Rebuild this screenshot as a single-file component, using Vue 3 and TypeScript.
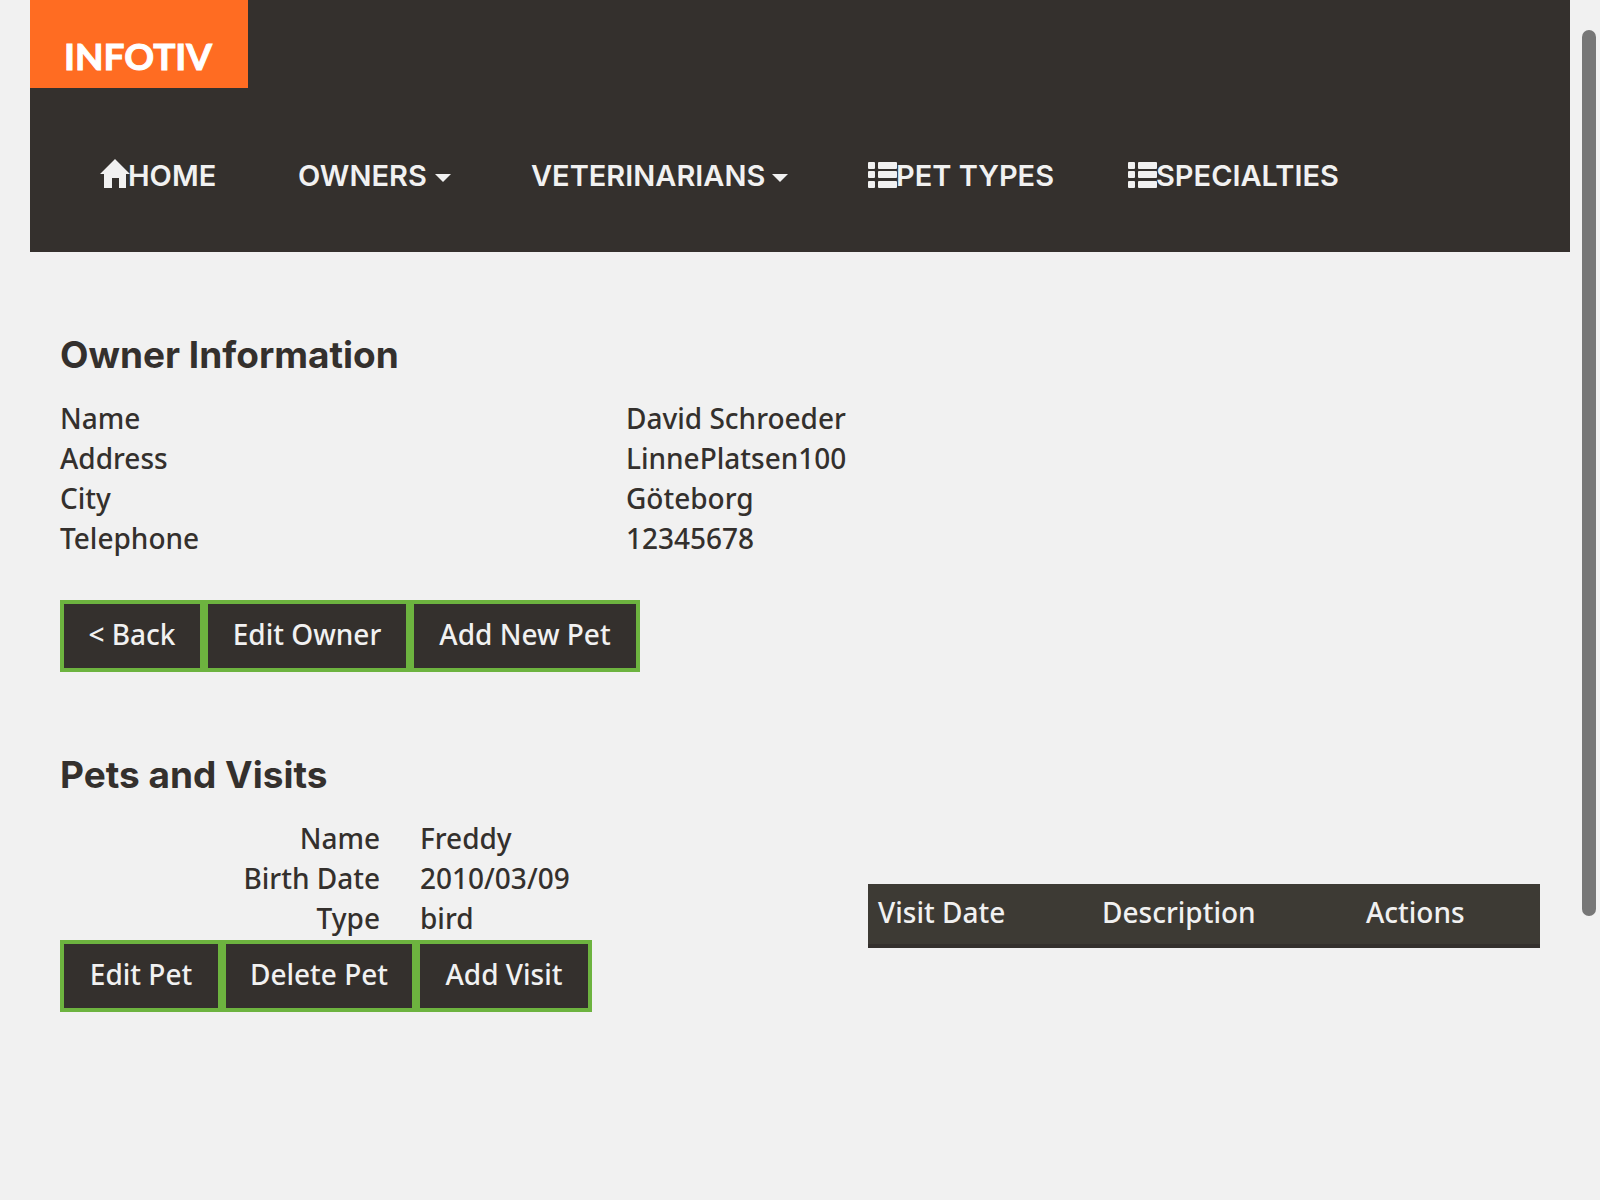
<script setup lang="ts">
interface NavItem { label: string; icon?: 'home' | 'list'; caret?: boolean }
interface Field { label: string; value: string }

const nav: NavItem[] = [
  { label: 'HOME', icon: 'home' },
  { label: 'OWNERS', caret: true },
  { label: 'VETERINARIANS', caret: true },
  { label: 'PET TYPES', icon: 'list' },
  { label: 'SPECIALTIES', icon: 'list' },
]
const owner: Field[] = [
  { label: 'Name', value: 'David Schroeder' },
  { label: 'Address', value: 'LinnePlatsen100' },
  { label: 'City', value: 'Göteborg' },
  { label: 'Telephone', value: '12345678' },
]
const pet: Field[] = [
  { label: 'Name', value: 'Freddy' },
  { label: 'Birth Date', value: '2010/03/09' },
  { label: 'Type', value: 'bird' },
]
</script>

<template>
  <div class="page">
    <header class="navbar">
      <a class="brand" href="#">INFOTIV</a>
      <nav class="menu">
        <a v-for="item in nav" :key="item.label" class="menu-link" href="#">
          <svg v-if="item.icon === 'home'" class="icon" viewBox="0 0 30 30" aria-hidden="true">
            <path d="M15 0L30 15H26V29H19V19H12V29H4V15H0Z" />
          </svg>
          <svg v-else-if="item.icon === 'list'" class="icon" viewBox="0 0 30 30" aria-hidden="true">
            <rect x="0" y="3" width="7" height="7" rx="1" />
            <rect x="10" y="3" width="19" height="7" rx="1" />
            <rect x="0" y="12" width="7" height="7" rx="1" />
            <rect x="10" y="12" width="19" height="7" rx="1" />
            <rect x="0" y="22" width="7" height="7" rx="1" />
            <rect x="10" y="22" width="19" height="7" rx="1" />
          </svg>
          <span>{{ item.label }}</span>
          <i v-if="item.caret" class="caret"></i>
        </a>
      </nav>
    </header>

    <main class="content">
      <h2>Owner Information</h2>
      <table class="owner">
        <tbody>
          <tr v-for="f in owner" :key="f.label">
            <th scope="row">{{ f.label }}</th>
            <td>{{ f.value }}</td>
          </tr>
        </tbody>
      </table>
      <div class="buttons owner-buttons">
        <button type="button">&lt; Back</button>
        <button type="button">Edit Owner</button>
        <button type="button">Add New Pet</button>
      </div>

      <h2>Pets and Visits</h2>
      <div class="pet">
        <div class="pet-info">
          <dl>
            <template v-for="f in pet" :key="f.label">
              <dt>{{ f.label }}</dt>
              <dd>{{ f.value }}</dd>
            </template>
          </dl>
          <div class="buttons pet-buttons">
            <button type="button">Edit Pet</button>
            <button type="button">Delete Pet</button>
            <button type="button">Add Visit</button>
          </div>
        </div>
        <table class="visits">
          <thead>
            <tr>
              <th scope="col">Visit Date</th>
              <th scope="col">Description</th>
              <th scope="col">Actions</th>
            </tr>
          </thead>
        </table>
      </div>
    </main>
    <div class="scroll-thumb"></div>
  </div>
</template>

<style>
body {
  margin: 0;
  background: #f1f1f1;
}
</style>

<style scoped>
.page {
  position: relative;
  min-height: 100vh;
  box-sizing: border-box;
  padding: 0 30px;
  background: #f1f1f1;
  color: #34302d;
  font: 500 28px/40px "Noto Sans", sans-serif;
}
.navbar {
  padding-bottom: 56px;
  background: #34302d;
}
.brand {
  display: block;
  box-sizing: border-box;
  width: 218px;
  height: 88px;
  padding: 36px 0 0 34px;
  background: #ff6c22;
  color: #fff;
  font: 700 37px/40px Lato, sans-serif;
  -webkit-text-stroke: 1px #fff;
  text-decoration: none;
}
.menu {
  display: grid;
  grid-template-columns: 118px 153px 257px 180px auto;
  justify-content: start;
  gap: 80px;
  padding: 68px 70px 0;
}
.menu-link {
  display: flex;
  align-items: center;
  color: #f1f1f1;
  font: 600 29px/40px Inter, sans-serif;
  text-decoration: none;
  white-space: nowrap;
}
.icon {
  flex: none;
  width: 30px;
  height: 30px;
  margin: 0 -2px 4px 0;
  fill: currentColor;
}
.caret {
  margin-top: 4px;
  margin-left: auto;
  border-top: 8px solid;
  border-right: 8px solid transparent;
  border-left: 8px solid transparent;
}
.content {
  padding: 80px 30px 0;
}
h2 {
  margin: 0;
  padding-bottom: 20px;
  font: 700 37px/46px Inter, sans-serif;
}
table {
  border-collapse: collapse;
  table-layout: fixed;
}
th {
  font-weight: 500;
  text-align: left;
}
th,
td {
  padding: 0;
}
.owner {
  width: 100%;
}
.owner th {
  width: 566px;
}
.buttons {
  display: grid;
  justify-content: start;
}
.owner-buttons {
  grid-template-columns: 144px 206px 230px;
  margin: 42px 0 80px;
}
.pet-buttons {
  grid-template-columns: 162px 194px 176px;
  margin-top: 2px;
}
button {
  height: 72px;
  padding: 0 0 4px;
  border: 4px solid #6db33f;
  border-radius: 0;
  background: #34302d;
  color: #f1f1f1;
  font: inherit;
  white-space: nowrap;
}
.pet {
  display: grid;
  grid-template-columns: 808fr 672fr;
}
dl {
  display: grid;
  grid-template-columns: 320px 1fr;
  column-gap: 40px;
  margin: 0;
}
dt {
  text-align: right;
}
dd {
  margin: 0;
}
.visits {
  align-self: start;
  width: 100%;
  margin-top: 66px;
}
.visits th {
  padding: 8px 10px 12px;
  border-bottom: 4px solid #34302d;
  background: #3d3a34;
  color: #f1f1f1;
}
.visits th:nth-child(1) { width: 204px; }
.visits th:nth-child(2) { width: 244px; }
.scroll-thumb {
  position: absolute;
  top: 30px;
  right: 4px;
  width: 14px;
  height: 886px;
  border-radius: 7px;
  background: #777;
}
</style>
